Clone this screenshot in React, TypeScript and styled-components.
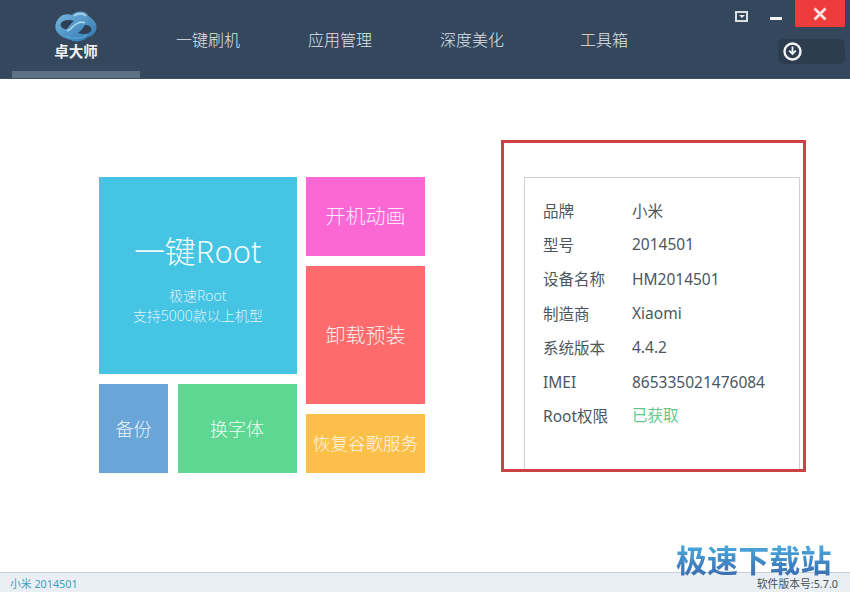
import React from "react";
import styled, { createGlobalStyle } from "styled-components";

const CJK = `"Noto Sans", "Noto Sans CJK SC", sans-serif`;

const Global = createGlobalStyle`
  html, body { margin: 0; padding: 0; background: #fff; }
  body { font-family: ${CJK}; }
  * { box-sizing: border-box; }
`;

const Page = styled.div`
  position: relative;
  width: 850px;
  height: 592px;
  display: flex;
  flex-direction: column;
  overflow: hidden;
  background: #fff;
`;

const Header = styled.header`
  height: 79px;
  flex: none;
  display: flex;
  padding-left: 12px;
  background: #34475c;
  border-bottom: 1px solid #3d5166;
`;

const Brand = styled.div`
  width: 128px;
  height: 78px;
  flex: none;
  display: flex;
  flex-direction: column;
  align-items: center;
  padding-top: 10px;
  border-bottom: 7px solid #5f7285;
`;

const BrandName = styled.span`
  margin-top: -2px;
  color: #f2f4f6;
  font-size: 14.5px;
  font-weight: 700;
  line-height: 18px;
`;

const Nav = styled.nav`
  display: flex;
  margin-left: 2px;
`;

const NavItem = styled.a`
  width: 132px;
  height: 78px;
  display: flex;
  align-items: center;
  justify-content: center;
  color: #dfe4e9;
  font-size: 16px;
  font-weight: 300;
  padding-bottom: 1px;
`;

const WindowArea = styled.div`
  margin-left: auto;
  width: 116px;
  padding-right: 5px;
  display: flex;
  flex-direction: column;
  align-items: flex-end;
`;

const WindowControls = styled.div`
  height: 27px;
  display: flex;
  align-items: flex-start;
`;

const MenuButton = styled.div`
  width: 13px;
  height: 11px;
  margin: 11px 22px 0 0;
  border: 2px solid #d9e0e6;
  display: flex;
  align-items: center;
  justify-content: center;
  &::after {
    content: "";
    border-left: 3px solid transparent;
    border-right: 3px solid transparent;
    border-top: 3px solid #e6eaee;
  }
`;

const MinButton = styled.div`
  width: 12px;
  height: 3px;
  margin: 17px 13px 0 0;
  background: #f0f2f4;
`;

const CloseButton = styled.div`
  width: 50px;
  height: 27px;
  background: #ee3b3b;
  display: flex;
  align-items: center;
  justify-content: center;
`;

const DownloadPill = styled.div`
  width: 67px;
  height: 25px;
  margin-top: 12px;
  padding-left: 5px;
  border-radius: 5px;
  background: #2d3d4f;
  display: flex;
  align-items: center;
`;

const Main = styled.main`
  flex: 1;
  display: flex;
  align-items: flex-start;
  padding: 98px 0 0 99px;
`;

const Mosaic = styled.div`
  width: 326px;
  height: 296px;
  flex: none;
  display: grid;
  grid-template-columns: 69px 119px 119px;
  grid-template-rows: 79px 10px 108px 10px 20px 10px 59px;
  column-gap: 9.5px;
`;

const Tile = styled.div<{ $bg: string; $size?: number }>`
  display: flex;
  flex-direction: column;
  align-items: center;
  justify-content: center;
  padding-bottom: 2px;
  background: ${(p) => p.$bg};
  color: rgba(255, 255, 255, 0.9);
  font-size: ${(p) => p.$size ?? 20}px;
  font-weight: 300;
  white-space: nowrap;
`;

const BigTile = styled(Tile)`
  grid-column: 1 / 3;
  grid-row: 1 / 4;
  padding: 4px 0 0;
`;

const BackupTile = styled(Tile)`
  grid-column: 1;
  grid-row: 5 / 8;
`;

const FontTile = styled(Tile)`
  grid-column: 2;
  grid-row: 5 / 8;
`;

const BootTile = styled(Tile)`
  grid-column: 3;
  grid-row: 1;
`;

const UninstallTile = styled(Tile)`
  grid-column: 3;
  grid-row: 3 / 6;
`;

const GoogleTile = styled(Tile)`
  grid-column: 3;
  grid-row: 7;
`;

const BigTitle = styled.div`
  font-size: 31px;
  line-height: 44px;
  color: rgba(255, 255, 255, 0.95);
`;

const BigSub = styled.div`
  margin-top: 13px;
  font-size: 14px;
  line-height: 20px;
  text-align: center;
  color: rgba(255, 255, 255, 0.82);
`;

const InfoPanel = styled.section`
  width: 276px;
  height: 293px;
  margin: 0 0 0 99px;
  padding: 15px 18px 0 18px;
  flex: none;
  background: #fff;
  border: 1px solid #cfd2d4;
  border-bottom: none;
`;

const InfoRow = styled.div`
  height: 34.3px;
  display: flex;
  align-items: center;
  color: #4b5661;
  font-size: 15.5px;
  white-space: nowrap;
`;

const InfoLabel = styled.span`
  width: 89px;
  flex: none;
`;

const InfoValue = styled.span<{ $ok?: boolean }>`
  color: ${(p) => (p.$ok ? "#63c78e" : "#4b5661")};
  ${(p) => (p.$ok ? "margin-top: -3px;" : "")}
`;

const RedFrame = styled.div`
  position: absolute;
  left: 501px;
  top: 140px;
  width: 305px;
  height: 332px;
  border: 3px solid #cf4144;
  pointer-events: none;
`;

const StatusBar = styled.footer`
  height: 20px;
  flex: none;
  display: flex;
  align-items: center;
  justify-content: space-between;
  padding: 0 12px 0 10px;
  background: #e9eff3;
  border-top: 1px solid #c9ced2;
  font-size: 10.8px;
`;

const DeviceName = styled.span`
  color: #3f9fc6;
`;

const VersionText = styled.span`
  color: #4a4f55;
  padding-top: 1px;
`;

const Watermark = styled.div`
  position: absolute;
  left: 676px;
  top: 541px;
  font-size: 31px;
  line-height: 38px;
  font-weight: 700;
  white-space: nowrap;
  letter-spacing: 0.1px;
  background: linear-gradient(180deg, #49a6dc 15%, #3c72b4 85%);
  -webkit-background-clip: text;
  background-clip: text;
  color: transparent;
`;

const Logo = () => (
  <svg width="44" height="34" viewBox="0 0 44 34" fill="none">
    <defs>
      <linearGradient id="lg" x1="0" y1="0" x2="1" y2="1">
        <stop offset="0" stopColor="#78b9de" />
        <stop offset="1" stopColor="#2c74b0" />
      </linearGradient>
    </defs>
    <path
      d="M5 8C9 3 15 4 18 5C21 1 30 0 33 4C35 7 40 9 42 14C44 20 40 26 34 27C30 31 22 33 17 30C13 29 9 28 6 25C0 21 0 13 5 8Z"
      fill="url(#lg)"
    />
    <path d="M7 13C9 10 15 9 20 11C17 13 15 16 13 19C9 19.5 5.5 16.5 7 13Z" fill="#2f4056" />
    <path d="M37 21C35 24 29 25 24 23C27 21 29 18 31 15C35 14.5 38.5 17.5 37 21Z" fill="#2f4056" />
    <path d="M13 21C17 20 19 15 24 13C27 11.5 29 12 31 13" stroke="#a6d2ea" strokeWidth="1.6" />
    <path d="M20 6C24 3 29 3 32 6" stroke="#b4daef" strokeWidth="1.4" />
    <path d="M12 26C18 29 26 29 33 25" stroke="#5aa2d2" strokeWidth="1.4" />
  </svg>
);

const CloseIcon = () => (
  <svg width="14" height="14" viewBox="0 0 14 14">
    <path d="M1.5 1.5L12.5 12.5M12.5 1.5L1.5 12.5" stroke="#fbe3e3" strokeWidth="2.8" />
  </svg>
);

const DownloadIcon = () => (
  <svg width="19" height="19" viewBox="0 0 19 19" fill="none">
    <circle cx="9.5" cy="9.5" r="8" stroke="#f2f4f6" strokeWidth="2.4" />
    <path d="M9.5 4.5V11M6.2 8.6L9.5 12L12.8 8.6" stroke="#f2f4f6" strokeWidth="1.8" />
  </svg>
);

const navItems = ["一键刷机", "应用管理", "深度美化", "工具箱"];

const infoRows = [
  ["品牌", "小米"],
  ["型号", "2014501"],
  ["设备名称", "HM2014501"],
  ["制造商", "Xiaomi"],
  ["系统版本", "4.4.2"],
  ["IMEI", "865335021476084"],
];

export default function App() {
  return (
    <Page>
      <Global />
      <Header>
        <Brand>
          <Logo />
          <BrandName>卓大师</BrandName>
        </Brand>
        <Nav>
          {navItems.map((n) => (
            <NavItem key={n}>{n}</NavItem>
          ))}
        </Nav>
        <WindowArea>
          <WindowControls>
            <MenuButton />
            <MinButton />
            <CloseButton>
              <CloseIcon />
            </CloseButton>
          </WindowControls>
          <DownloadPill>
            <DownloadIcon />
          </DownloadPill>
        </WindowArea>
      </Header>
      <Main>
        <Mosaic>
          <BigTile $bg="#46c4e3">
            <BigTitle>一键Root</BigTitle>
            <BigSub>
              极速Root
              <br />
              支持5000款以上机型
            </BigSub>
          </BigTile>
          <BootTile $bg="#fc67d6">开机动画</BootTile>
          <UninstallTile $bg="#fd6b6c">卸载预装</UninstallTile>
          <BackupTile $bg="#6aa5d8" $size={18}>备份</BackupTile>
          <FontTile $bg="#5dd792" $size={18}>换字体</FontTile>
          <GoogleTile $bg="#fcc04a" $size={17.5}>恢复谷歌服务</GoogleTile>
        </Mosaic>
        <InfoPanel>
          {infoRows.map(([k, v]) => (
            <InfoRow key={k}>
              <InfoLabel>{k}</InfoLabel>
              <InfoValue>{v}</InfoValue>
            </InfoRow>
          ))}
          <InfoRow>
            <InfoLabel>Root权限</InfoLabel>
            <InfoValue $ok>已获取</InfoValue>
          </InfoRow>
        </InfoPanel>
      </Main>
      <StatusBar>
        <DeviceName>小米 2014501</DeviceName>
        <VersionText>软件版本号:5.7.0</VersionText>
      </StatusBar>
      <RedFrame />
      <Watermark>极速下载站</Watermark>
    </Page>
  );
}
